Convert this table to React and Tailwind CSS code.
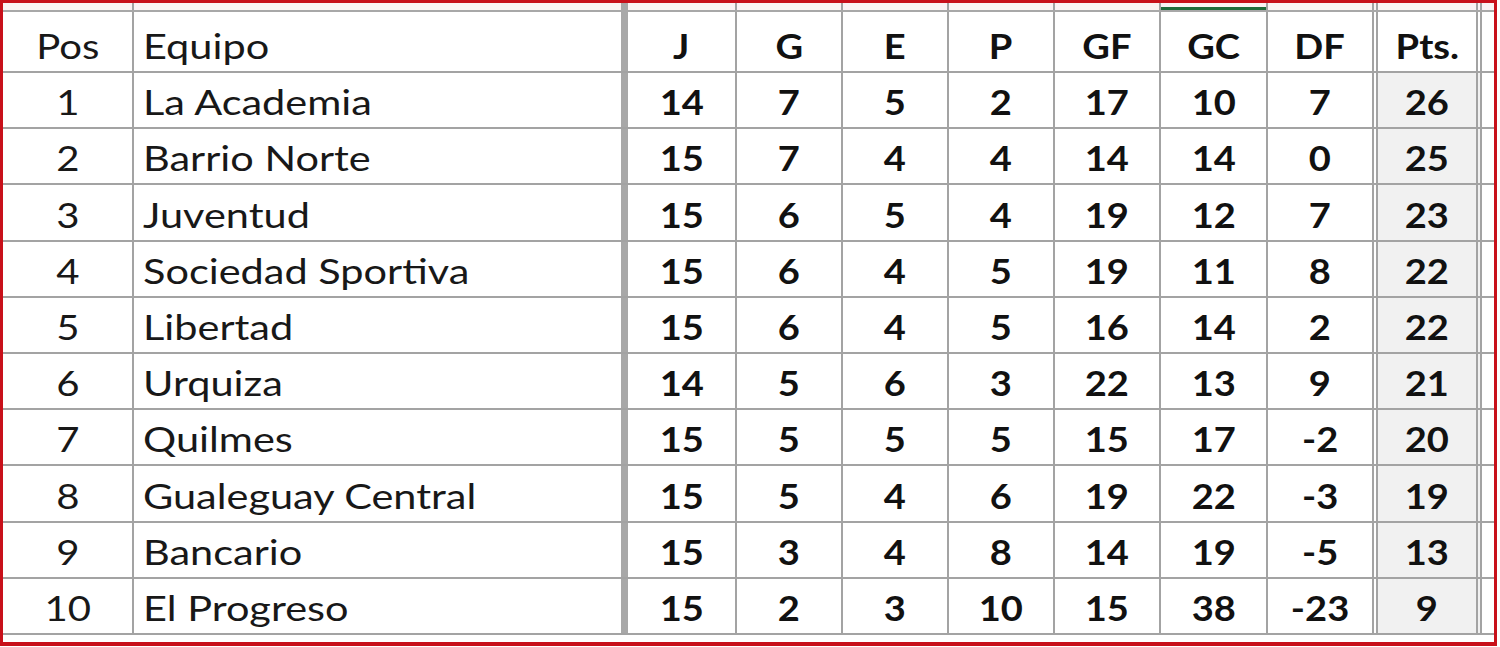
import React from 'react';

const rows = [
  [1, 'La Academia', 14, 7, 5, 2, 17, 10, 7, 26],
  [2, 'Barrio Norte', 15, 7, 4, 4, 14, 14, 0, 25],
  [3, 'Juventud', 15, 6, 5, 4, 19, 12, 7, 23],
  [4, 'Sociedad Sportiva', 15, 6, 4, 5, 19, 11, 8, 22],
  [5, 'Libertad', 15, 6, 4, 5, 16, 14, 2, 22],
  [6, 'Urquiza', 14, 5, 6, 3, 22, 13, 9, 21],
  [7, 'Quilmes', 15, 5, 5, 5, 15, 17, -2, 20],
  [8, 'Gualeguay Central', 15, 5, 4, 6, 19, 22, -3, 19],
  [9, 'Bancario', 15, 3, 4, 8, 14, 19, -5, 13],
  [10, 'El Progreso', 15, 2, 3, 10, 15, 38, -23, 9],
];

// widths include the right border of each column
const cols = [
  { w: 'w-[131px]', b: 'border-r-2 border-[#a3a3a3]' },
  { w: 'w-[494px]', b: 'border-r-[7px] border-[#a8a8a8]' },
  { w: 'w-[109px]', b: 'border-r-2 border-[#a3a3a3]' },
  { w: 'w-[106px]', b: 'border-r-2 border-[#a3a3a3]' },
  { w: 'w-[106px]', b: 'border-r-2 border-[#a3a3a3]' },
  { w: 'w-[106px]', b: 'border-r-2 border-[#a3a3a3]' },
  { w: 'w-[106px]', b: 'border-r-2 border-[#a3a3a3]' },
  { w: 'w-[107px]', b: 'border-r-2 border-[#a3a3a3]' },
  { w: 'w-[110px]', b: 'border-r-[6px] border-double border-[#a3a3a3]' },
  { w: 'w-[104px]', b: 'border-r-[6px] border-double border-[#a3a3a3]' },
];

const headers = ['Pos', 'Equipo', 'J', 'G', 'E', 'P', 'GF', 'GC', 'DF', 'Pts.'];

function Cell({ i, children, bg }) {
  const c = cols[i];
  const align = i === 1 ? 'justify-start pl-[9px]' : 'justify-center';
  const text =
    i >= 2
      ? 'font-bold text-[#111] scale-x-[1.12] origin-center'
      : i === 1
        ? 'font-normal text-[#181818] scale-x-[1.22] origin-left'
        : 'font-normal text-[#181818] scale-x-[1.18] origin-center';
  return (
    <div className={`${c.w} ${c.b} ${align} ${bg || ''} flex items-end pb-[8px] h-full flex-shrink-0`}>
      <span className={`${text} inline-block leading-none whitespace-nowrap`}>{children}</span>
    </div>
  );
}

export default function App() {
  return (
    <div className="w-[1500px] h-[647px] bg-white">
      <div
        className="w-[1497px] h-[646px] border-l-[3px] border-t-[3px] border-r-[3px] border-b-[4px] border-[#c8101a] bg-white flex flex-col text-[34px]"
        style={{ fontFamily: 'Lato, "Open Sans", sans-serif' }}
      >
        {/* strip above header */}
        <div className="flex h-[9px] border-b-2 border-[#a8a8a8] flex-shrink-0 bg-[#fbf3f3]">
          {cols.map((c, i) => (
            <div key={i} className={`${c.w} ${c.b} h-full flex items-end flex-shrink-0`}>
              {i === 7 && <div className="w-full h-[3px] bg-[#1f6b3a]" />}
            </div>
          ))}
        </div>
        <div className="flex h-[61px] border-b-2 border-[#a3a3a3] flex-shrink-0">
          {headers.map((h, i) => (
            <Cell key={h} i={i}>
              {h}
            </Cell>
          ))}
        </div>
        {rows.map((r) => (
          <div key={r[0]} className="flex h-[56.2px] border-b-2 border-[#a3a3a3] flex-shrink-0">
            {r.map((v, i) => (
              <Cell key={i} i={i} bg={i === 9 ? 'bg-[#f1f1f1]' : ''}>
                {v}
              </Cell>
            ))}
          </div>
        ))}
      </div>
    </div>
  );
}
